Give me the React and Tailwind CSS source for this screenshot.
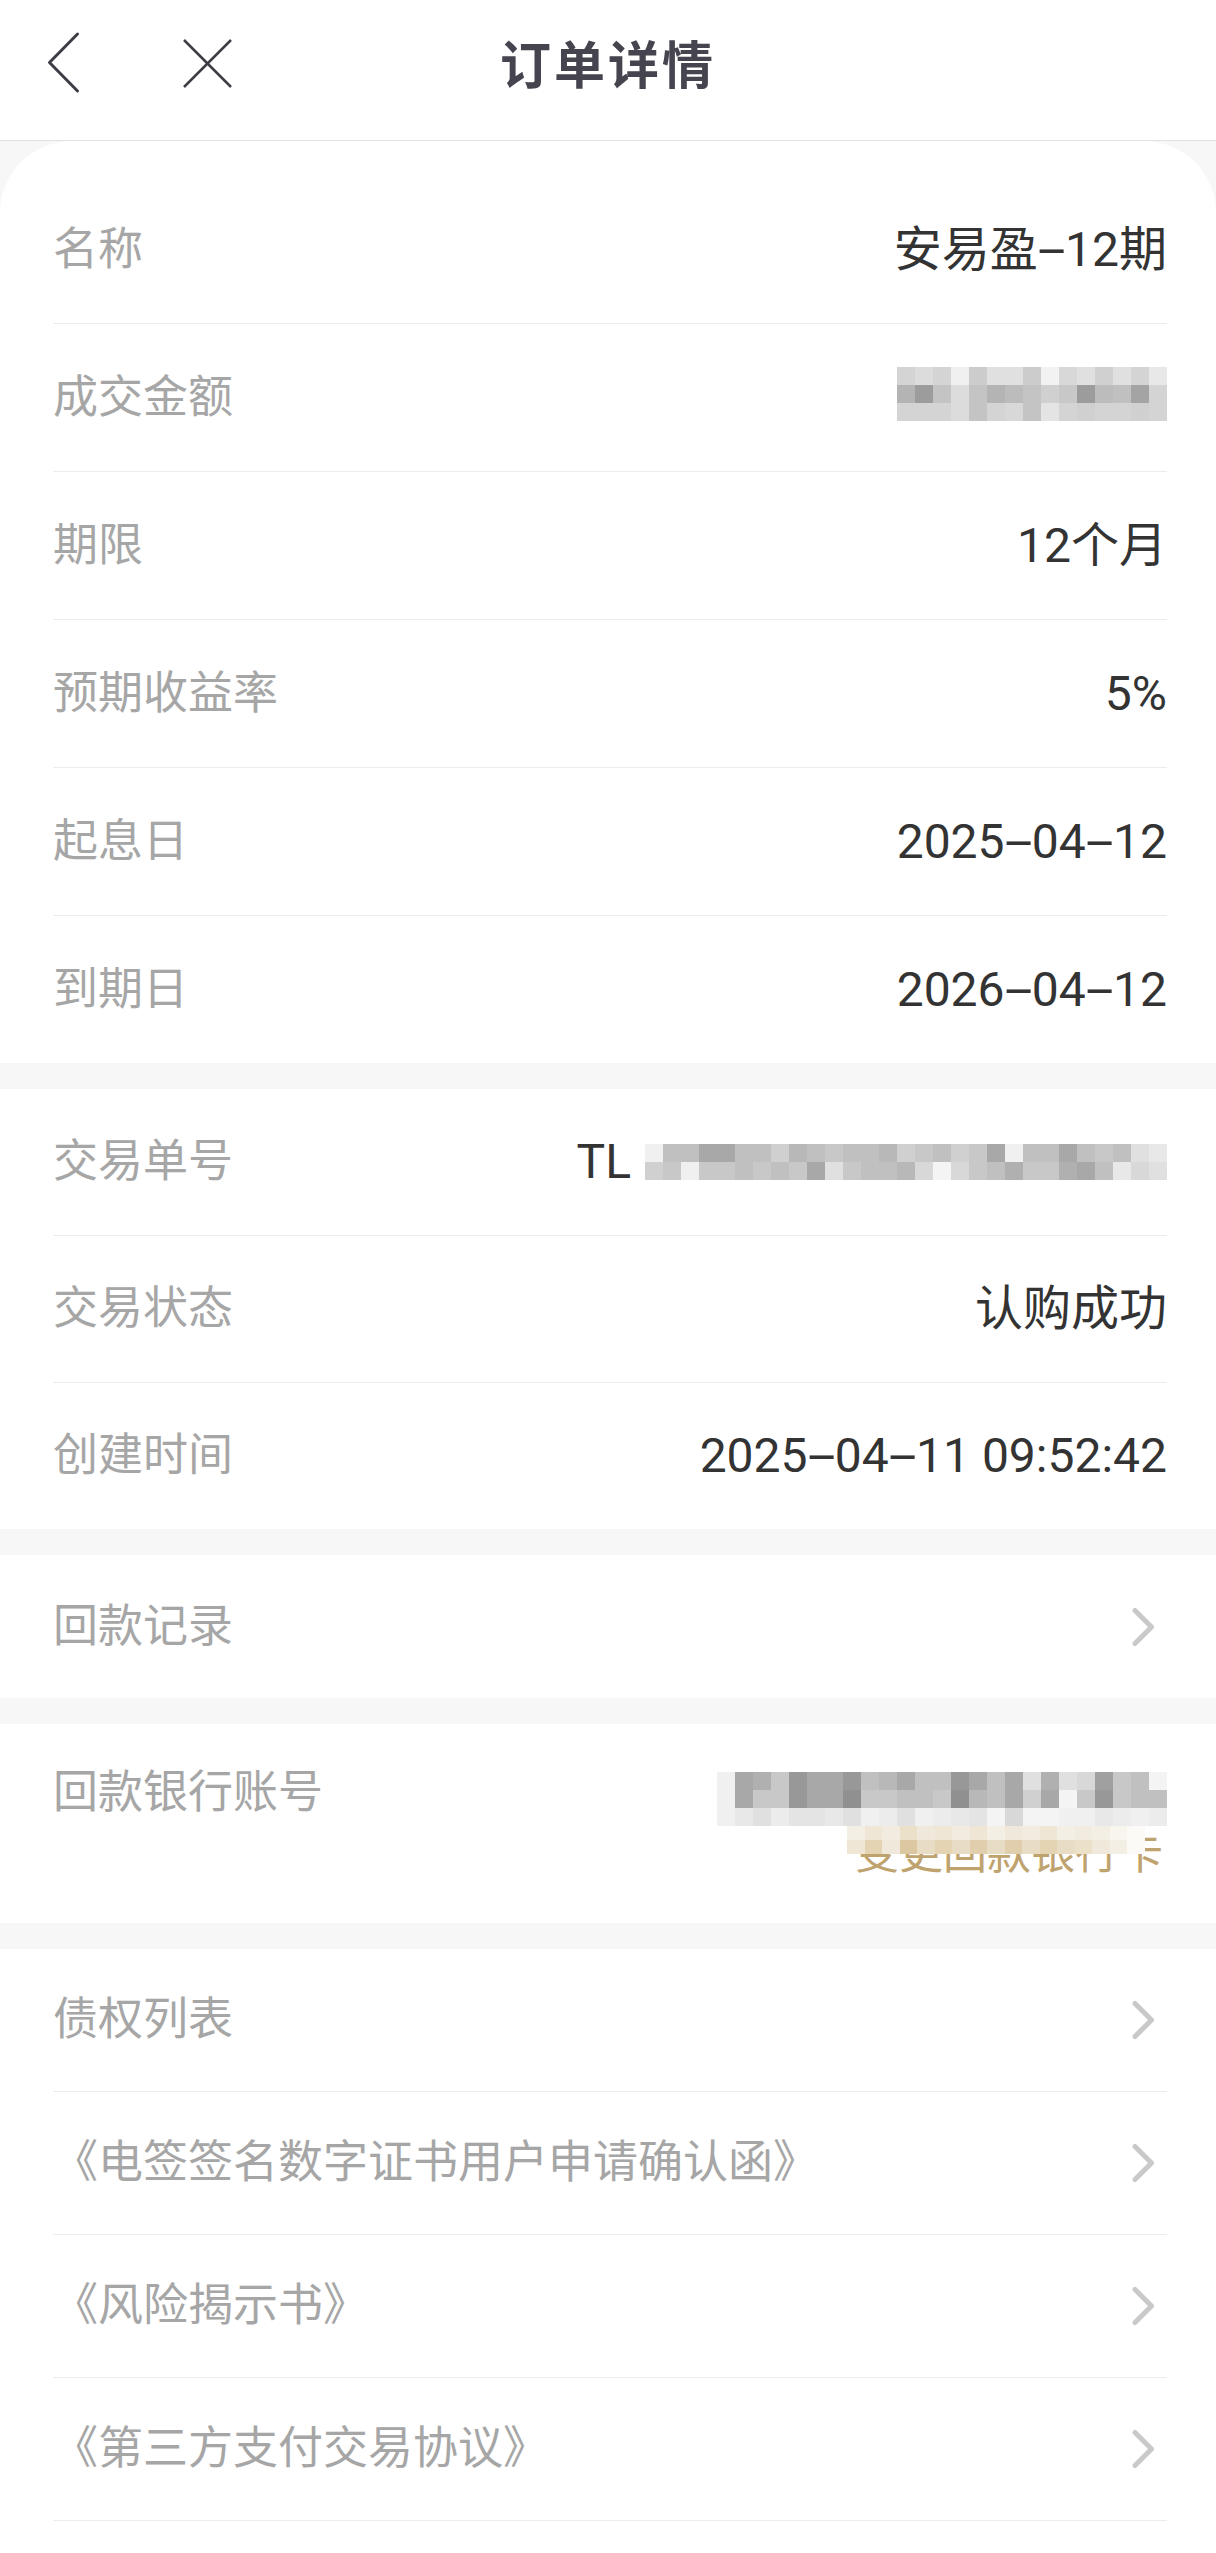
import React from 'react';

const grey = (s) => s.split(' ').map((v) => (v.length === 2 ? `#${v}${v}${v}` : `#${v}`));

const amountRows = [
  grey('d4 dc d4 f0 cc e0 e0 cc f2 d8 e0 d0 e0 d4 e8'),
  grey('b4 9c c4 dc c4 b4 bc c4 d0 c8 9c bc c0 a4 d4'),
  grey('d4 d4 d4 dc c4 d4 d8 c4 e4 d4 d0 d4 d4 d0 d4'),
];

const orderRows = [
  grey('f0 c0 c0 a8 a8 c0 c0 d0 b8 c0 c8 c0 c0 b8 d0 c8 c0 d0 c8 a8 f0 c0 c0 a8 c0 c8 c0 e0 e8'),
  grey('d0 c8 f0 c8 c8 c0 c8 c0 c8 a8 e0 c8 c0 c0 b8 d8 f4 d8 c8 c0 b0 c8 c8 b0 a8 c0 e8 d8 e0'),
];

const bankRows = [
  grey('f0 a8 b0 c8 98 a8 a8 98 c0 b8 a8 c0 c0 98 a8 c0 a8 e0 b0 e0 d8 a0 c8 c0 f4'),
  grey('f0 a8 c8 c8 98 a8 a8 90 c8 c8 c0 c0 c8 90 b8 c0 a8 d0 a8 f4 c8 98 c8 c0 c0'),
  grey('f0 e8 e0 ec e4 e4 e8 e0 f0 ec e0 f0 ec e8 e4 f4 d8 f4 f4 f0 f0 e8 ec f0 ec'),
];

const goldRows = [
  grey('f4efe4 efe6d6 f2ece0 ebe0c8 f0e8da efe6d6 f2ece0 efe6d6 f4efe4 f0e8da f2ece0 efe6d6 f4efe4 f2ece0 f4efe4 f8f5ee fbfaf6'),
  grey('efe6d6 e4d4b4 f0e8da dcc8a0 e8dcc4 e4d4b4 e8dcc4 e0ceac e8dcc4 e0ceac e8dcc4 e4d4b4 e8dcc4 ebe0c8 f0e8da f4efe4 fbfaf6'),
];

function Mosaic({ rows, cell }) {
  return (
    <div className="flex flex-col">
      {rows.map((r, i) => (
        <div key={i} className="flex">
          {r.map((c, j) => (
            <div key={j} className={cell} style={{ backgroundColor: c }} />
          ))}
        </div>
      ))}
    </div>
  );
}

// hyphens in the original font are much wider than Roboto's
function Val({ text }) {
  const parts = text.split('-');
  return (
    <span className="text-[48px] leading-[1.2] text-[#333333]">
      {parts.map((p, i) => (
        <React.Fragment key={i}>
          {i > 0 && <span className="inline-block mx-[7px] scale-x-[2.1]">-</span>}
          {p}
        </React.Fragment>
      ))}
    </span>
  );
}

function Label({ children }) {
  return <span className="text-[45px] leading-[1.2] text-[#a6a6a6]">{children}</span>;
}

function Row({ label, h, border = true, children }) {
  return (
    <div className={`flex items-center justify-between ${h} ${border ? 'border-b border-[#ececec]' : ''}`}>
      <Label>{label}</Label>
      {children}
    </div>
  );
}

function Chevron() {
  return (
    <svg width="26" height="40" viewBox="0 0 26 40" fill="none" className="mr-[11px]">
      <polyline points="5,3.5 21.5,20 5,36.5" stroke="#c9c9c9" strokeWidth="5" strokeLinecap="round" strokeLinejoin="round" />
    </svg>
  );
}

function LinkRow({ label }) {
  return (
    <div className="flex items-center justify-between h-[143px] border-b border-[#ececec]">
      <Label>{label}</Label>
      <Chevron />
    </div>
  );
}

export default function App() {
  return (
    <div className="min-h-[2553px] flex flex-col bg-[#f7f7f7] font-[family-name:Roboto,'Noto_Sans_CJK_SC',sans-serif]">
      {/* Header */}
      <div className="h-[141px] bg-white border-b border-[#e2e2e2]">
        <div className="h-[125px] grid grid-cols-[1fr_auto_1fr] items-center">
          <div className="flex items-center pl-[46px]">
            <svg width="36" height="64" viewBox="0 0 36 64" fill="none">
              <polyline points="31.5,3 3.5,31.5 31.5,60" stroke="#3d3d45" strokeWidth="3" strokeLinecap="round" strokeLinejoin="round" />
            </svg>
            <svg width="52" height="52" viewBox="0 0 52 52" fill="none" className="ml-[99px]">
              <line x1="3" y1="3" x2="50" y2="50" stroke="#3d3d45" strokeWidth="2.5" />
              <line x1="50" y1="3" x2="3" y2="50" stroke="#3d3d45" strokeWidth="2.5" />
            </svg>
          </div>
          <h1 className="text-[51px] leading-[1.2] font-bold tracking-[3px] text-[#45444f] font-[family-name:'Noto_Sans_CJK_SC',sans-serif]">
            订单详情
          </h1>
          <div />
        </div>
      </div>

      {/* Product info */}
      <div className="bg-white rounded-t-[72px] pt-[35px] pl-[53px] pr-[49px]">
        <Row label="名称" h="h-[148px]">
          <Val text="安易盈-12期" />
        </Row>
        <Row label="成交金额" h="h-[148px]">
          <div className="mb-[8px]">
            <Mosaic rows={amountRows} cell="w-[18px] h-[18px]" />
          </div>
        </Row>
        <Row label="期限" h="h-[148px]">
          <Val text="12个月" />
        </Row>
        <Row label="预期收益率" h="h-[148px]">
          <Val text="5%" />
        </Row>
        <Row label="起息日" h="h-[148px]">
          <Val text="2025-04-12" />
        </Row>
        <Row label="到期日" h="h-[147px]" border={false}>
          <Val text="2026-04-12" />
        </Row>
      </div>

      {/* Trade info */}
      <div className="bg-white mt-[26px] pl-[53px] pr-[49px]">
        <Row label="交易单号" h="h-[147px]">
          <div className="flex items-center">
            <span className="text-[48px] leading-[1.2] text-[#333333]">TL</span>
            <div className="ml-[14px]">
              <Mosaic rows={orderRows} cell="w-[18px] h-[18px]" />
            </div>
          </div>
        </Row>
        <Row label="交易状态" h="h-[147px]">
          <Val text="认购成功" />
        </Row>
        <Row label="创建时间" h="h-[146px]" border={false}>
          <Val text="2025-04-11 09:52:42" />
        </Row>
      </div>

      {/* Repayment record */}
      <div className="bg-white mt-[26px] h-[143px] pl-[53px] pr-[49px] flex items-center justify-between">
        <Label>回款记录</Label>
        <Chevron />
      </div>

      {/* Bank account */}
      <div className="bg-white mt-[26px] h-[199px] pl-[53px] pr-[49px] pt-[43px] flex justify-between items-start">
        <span className="text-[45px] leading-[52px] text-[#a6a6a6]">回款银行账号</span>
        <div className="flex flex-col items-end mt-[5px]">
          <Mosaic rows={bankRows} cell="w-[18px] h-[18px]" />
          <div className="relative mt-[6px] mr-[4px]">
            <span className="block text-[44px] leading-[44px] text-[#bfa36f]">变更回款银行卡</span>
            <div className="absolute left-[-8px] top-[-6px]">
              <Mosaic rows={goldRows} cell="w-[17.5px] h-[14px]" />
            </div>
          </div>
        </div>
      </div>

      {/* Documents */}
      <div className="bg-white mt-[26px] flex-1 pl-[53px] pr-[49px]">
        <LinkRow label="债权列表" />
        <LinkRow label="《电签签名数字证书用户申请确认函》" />
        <LinkRow label="《风险揭示书》" />
        <LinkRow label="《第三方支付交易协议》" />
      </div>
    </div>
  );
}
